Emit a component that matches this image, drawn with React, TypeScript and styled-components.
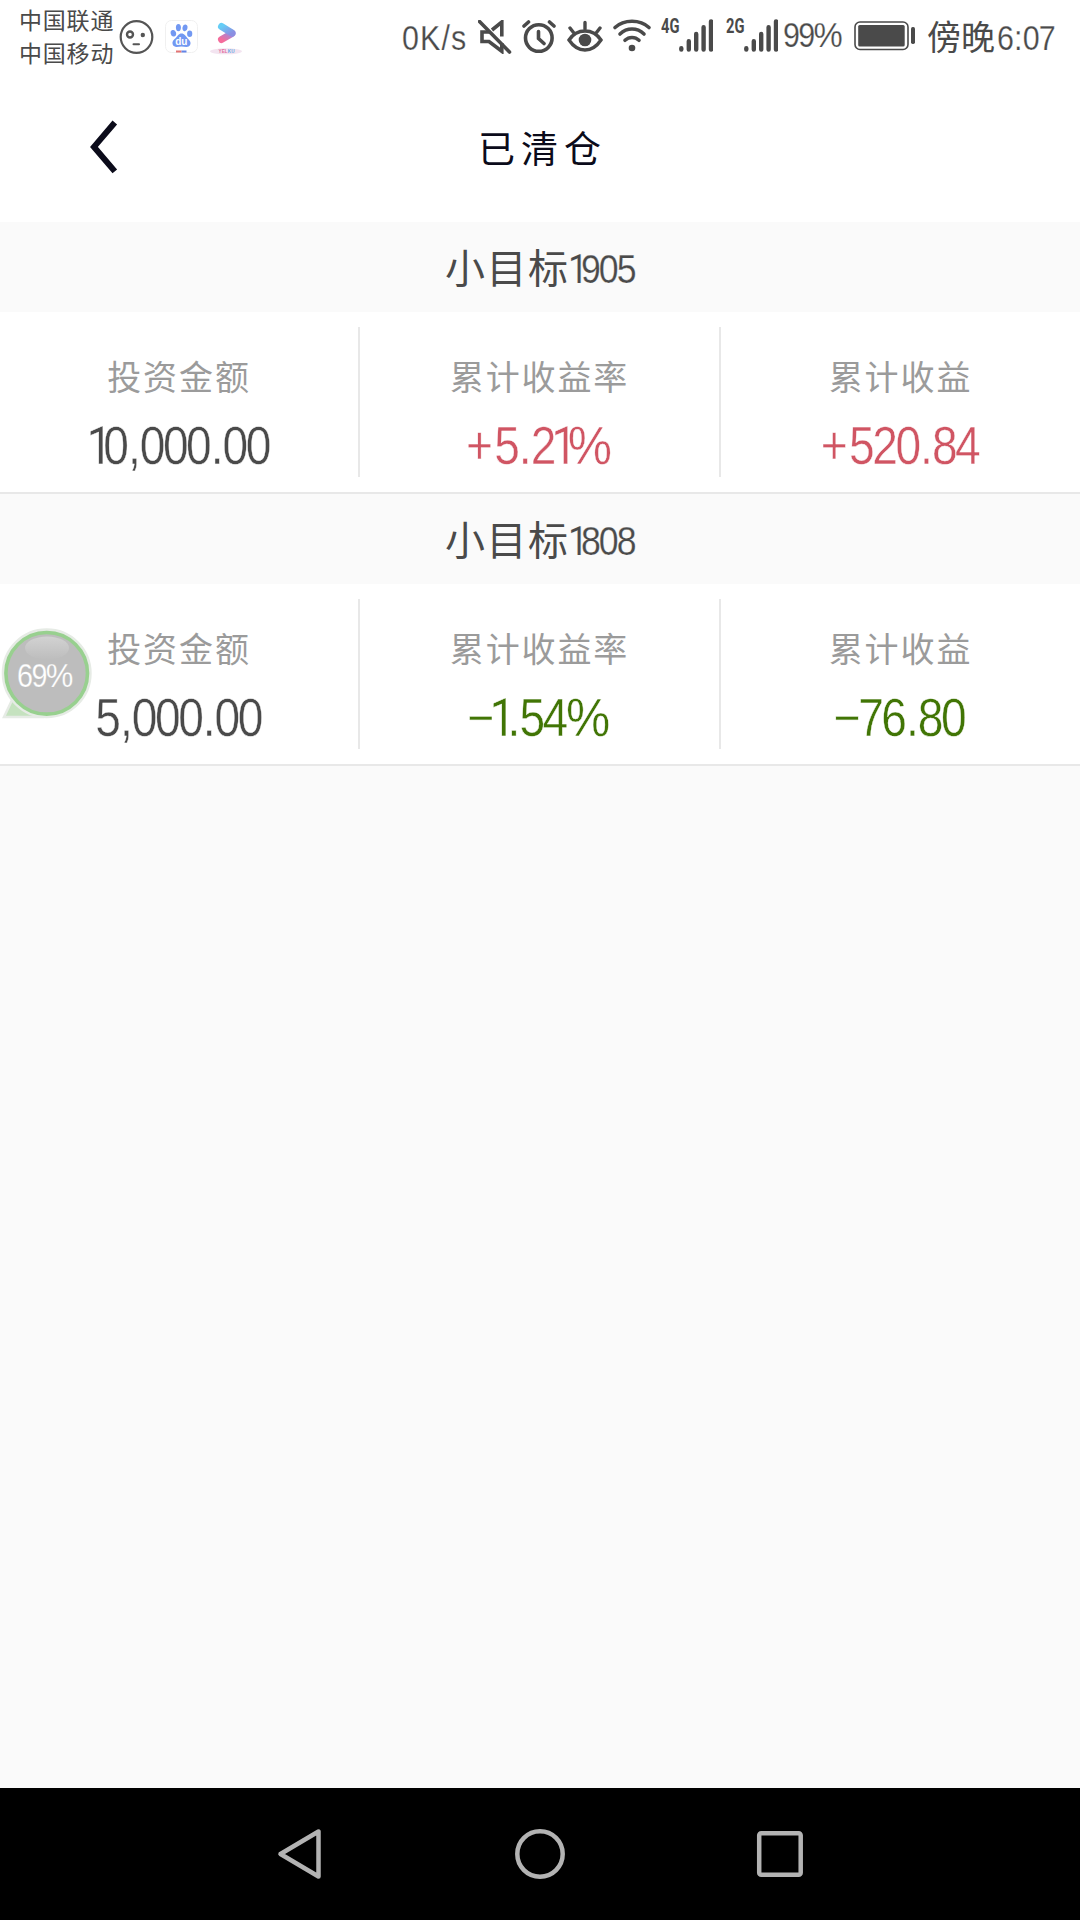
import React from "react";
import styled, { createGlobalStyle } from "styled-components";

const GlobalStyle = createGlobalStyle`
  * { box-sizing: border-box; }
  body { margin: 0; background: #fafafa; }
`;

const CJK = `"Noto Sans CJK SC", sans-serif`;
const LATIN = `"Liberation Sans", Arial, sans-serif`;

const Screen = styled.div`
  position: relative;
  display: flex;
  flex-direction: column;
  width: 1080px;
  height: 1920px;
  overflow: hidden;
  background: #fafafa;
  color: #4a4a4a;
  font-family: ${CJK};
`;

const StatusBar = styled.header`
  display: flex;
  align-items: flex-start;
  height: 74px;
  padding-left: 19px;
  background: #fff;
`;

const Carriers = styled.div`
  display: flex;
  flex-direction: column;
  width: 99px;
  padding-top: 3px;
  font-size: 23px;
  line-height: 33px;
  letter-spacing: 0.8px;
  white-space: nowrap;
`;

const Glyph = styled.svg<{ $gap?: number; $top?: number }>`
  display: block;
  flex: none;
  margin-left: ${(p) => p.$gap ?? 0}px;
  margin-top: ${(p) => p.$top ?? 0}px;
`;

const StatusText = styled.div<{ $width: number; $gap?: number; $top: number }>`
  display: flex;
  flex: none;
  width: ${(p) => p.$width}px;
  height: 40px;
  margin-left: ${(p) => p.$gap ?? 0}px;
  margin-top: ${(p) => p.$top}px;
  font-size: 34px;
  line-height: 40px;
  white-space: nowrap;
`;

const DigitRun = styled.span<{ $size: number; $track: number; $origin: string; $edge: string }>`
  display: block;
  font-family: ${LATIN};
  font-size: ${(p) => p.$size}px;
  letter-spacing: ${(p) => p.$track}em;
  transform: scaleX(0.87);
  transform-origin: ${(p) => p.$origin} center;
  white-space: nowrap;
  /* an edge in the background colour thins the strokes */
  -webkit-text-stroke: ${(p) => (p.$size > 50 ? 0.45 : 0.25)}px ${(p) => p.$edge};
`;

const NarrowOne = styled.span`
  letter-spacing: -0.2em;
  font-family: Roboto, sans-serif;
`;

const BeforeOne = styled.span`
  letter-spacing: -0.11em;
`;

const Mark = styled.span`
  margin: 0 0.032em;
`;

const Plus = styled.span`
  margin-right: 0.085em;
`;

const Percent = styled.span`
  display: inline-block;
  margin-right: 0.11em;
  transform: scaleX(1.08);
  transform-origin: left;
`;

const TitleBar = styled.div`
  display: grid;
  grid-template-columns: 200px 1fr 200px;
  height: 148px;
  background: #fff;
  color: #0b0b1a;
`;

const BackButton = styled.button`
  display: flex;
  width: 60px;
  height: 56px;
  margin: 46px 0 0 74px;
  padding: 0 0 0 14px;
  border: 0;
  background: none;
`;

const PageTitle = styled.h1`
  margin: 46px 0 0;
  padding-left: 5px;
  text-align: center;
  font-size: 37px;
  font-weight: 400;
  line-height: 54px;
  letter-spacing: 6px;
`;

const Holding = styled.section`
  background: #fff;
  border-bottom: 2px solid #e8e8e8;
`;

const HoldingName = styled.h2`
  display: flex;
  justify-content: center;
  height: 90px;
  margin: 0;
  background: #fafafa;
  font-size: 40px;
  font-weight: 400;
  line-height: 88px;
  letter-spacing: 1.500px;
`;

const Code = styled.div`
  width: 67px;
  margin-left: -1.500px;
  padding-top: 3px;
`;

const Metrics = styled.div`
  display: grid;
  grid-template-columns: 360px 361px 359px;
  height: 180px;
  padding: 15px 0;
`;

const Metric = styled.div`
  display: flex;
  flex-direction: column;
  align-items: center;
  padding-top: 23px;
  border-right: 2px solid #e8e8e8;
  &:last-child {
    border-right: 0;
  }
`;

const Label = styled.div`
  height: 50px;
  font-size: 34px;
  line-height: 51px;
  letter-spacing: 1.900px;
  color: #9b9b9b;
`;

const Value = styled.div<{ $tone: string }>`
  display: flex;
  height: 60px;
  margin-top: 15px;
  padding-right: 2.500px;
  line-height: 61px;
  color: ${(p) => p.$tone};
`;

const Bubble = styled.div`
  position: absolute;
  left: 0;
  top: 626px;
  width: 94px;
  height: 96px;
`;

const BubbleText = styled.div`
  position: absolute;
  left: 17px;
  top: 30px;
  line-height: 40px;
  color: #fff;
`;

const NavBar = styled.nav`
  display: flex;
  justify-content: center;
  align-items: center;
  gap: 190px;
  height: 132px;
  margin-top: auto;
  background: #000;
`;

const Network = styled.div<{ $gap: number }>`
  flex: none;
  width: 18px;
  margin-left: ${(p) => p.$gap}px;
  margin-top: 16px;
  font: 700 21px/21px Roboto, sans-serif;
  span {
    display: inline-block;
    transform: scaleX(0.7);
    transform-origin: left;
  }
`;

const pickGlyph = (c: string, i: number, all: string[]) => {
  if (c === "1") return <NarrowOne key={i}>{c}</NarrowOne>;
  if (c === "." || c === "," || c === ":") return <Mark key={i}>{c}</Mark>;
  if (c === "+") return <Plus key={i}>{c}</Plus>;
  if (c === "%") return <Percent key={i}>{c}</Percent>;
  if (all[i + 1] === "1") return <BeforeOne key={i}>{c}</BeforeOne>;
  return c;
};

type DigitsProps = {
  text: string;
  size: number;
  track?: number;
  origin?: string;
  edge?: string;
};

const Digits = ({ text, size, track = -0.054, origin = "left", edge = "#fff" }: DigitsProps) => (
  <DigitRun $size={size} $track={track} $origin={origin} $edge={edge}>
    {text.split("").map(pickGlyph)}
  </DigitRun>
);

const Signal = () => (
  <Glyph width="34" height="34" viewBox="0 0 34 34" $top={19} stroke="#4a4a4a" strokeWidth="4.400" strokeLinecap="round">
    <path d="M2.300 29.200v1.300M9.800 22.200v8.300M17.200 15v15.500M24.600 8.200v22.300M32 2.400v28.100" />
  </Glyph>
);

const RED = "#d05563";
const GREEN = "#417505";
const DARK = "#4a4a4a";

const holdings = [
  {
    code: "1905",
    metrics: [
      { label: "投资金额", value: "10,000.00", tone: DARK },
      { label: "累计收益率", value: "+5.21%", tone: RED },
      { label: "累计收益", value: "+520.84", tone: RED },
    ],
  },
  {
    code: "1808",
    metrics: [
      { label: "投资金额", value: "5,000.00", tone: DARK },
      { label: "累计收益率", value: "−1.54%", tone: GREEN },
      { label: "累计收益", value: "−76.80", tone: GREEN },
    ],
  },
];

export default function App() {
  return (
    <>
      <GlobalStyle />
      <Screen>
        <StatusBar>
          <Carriers>
            <span>中国联通</span>
            <span>中国移动</span>
          </Carriers>
          <Glyph width="36" height="36" viewBox="0 0 36 36" $top={19} fill="none" stroke="#555">
            <circle cx="18.500" cy="18" r="15.800" strokeWidth="2.200" />
            <circle cx="12" cy="15.500" r="3" strokeWidth="2.400" />
            <circle cx="24.800" cy="16" r="2.200" fill="#555" stroke="none" />
            <path d="M15.500 25.300h5.500" strokeWidth="2" strokeLinecap="round" />
          </Glyph>
          <Glyph width="33" height="34" viewBox="0 0 33 34" $gap={11} $top={20}>
            <rect x="0.500" y="0.500" width="32" height="32" rx="6" fill="#fff" stroke="#f0f0f0" />
            <g fill="#7298f2">
              <ellipse cx="8.400" cy="13.200" rx="2.700" ry="3.300" transform="rotate(-15 8.400 13.200)" />
              <ellipse cx="13.400" cy="7.600" rx="2.500" ry="3.600" />
              <ellipse cx="20" cy="7.800" rx="2.500" ry="3.400" transform="rotate(10 20 7.800)" />
              <ellipse cx="24.700" cy="13.700" rx="2.600" ry="3.300" />
              <path d="M16.500 13.600c3 0 4 2.500 6 4.600 2.500 2.400 3.700 4 2.800 6.300-1.700 4-5.800 1.900-8.800 1.900s-7.200 2-8.800-1.800c-1-2.500.6-4.500 3-6.500 2-1.800 2.800-4.500 5.800-4.500z" />
            </g>
            <text x="10.200" y="24.500" fontFamily="Liberation Sans, sans-serif" fontWeight="700" fontSize="10" fill="#fff">du</text>
            <path d="M11 31.500h5.500" stroke="#e37474" strokeWidth="2" />
            <path d="M16.500 31.500h5" stroke="#6284e8" strokeWidth="2" />
          </Glyph>
          <Glyph width="34" height="34" viewBox="0 0 34 34" $gap={11} $top={21}>
            <defs>
              <linearGradient id="top" x1="0" y1="0" x2="1" y2="1">
                <stop offset="0" stopColor="#65cdf6" />
                <stop offset="1" stopColor="#8b8fe2" />
              </linearGradient>
              <linearGradient id="low" x1="0" y1="1" x2="1" y2="0">
                <stop offset="0" stopColor="#f56c9b" />
                <stop offset="1" stopColor="#9a8bdf" />
              </linearGradient>
            </defs>
            <ellipse cx="17" cy="30.300" rx="16" ry="3" fill="#f3e4f0" />
            <path d="M12.500 18.500L23 12.500" stroke="url(#low)" strokeWidth="7" strokeLinecap="round" />
            <path d="M12.500 5.500L23 12" stroke="url(#top)" strokeWidth="7" strokeLinecap="round" />
            <text x="9.500" y="32" fontFamily="Liberation Sans, sans-serif" fontWeight="700" fontSize="4.600" textLength="16">
              <tspan fill="#e36d9d">YEL</tspan>
              <tspan fill="#69a9e5">KU</tspan>
            </text>
          </Glyph>
          <StatusText $width={76} $gap={159} $top={18}>
            <Digits text="0K/s" size={35} track={0.035} />
          </StatusText>
          <Glyph width="34" height="34" viewBox="0 0 34 34" $top={20} fill="none" stroke="#4a4a4a" strokeWidth="3.600">
            <path d="M14 10l9.800-8v14.500M12 12H4v9.500h7l12.800 9.800V23" />
            <path d="M1.500 1.500l30 30.500" strokeLinecap="round" />
          </Glyph>
          <Glyph width="34" height="34" viewBox="0 0 34 34" $gap={10} $top={20} fill="none" stroke="#4a4a4a" strokeWidth="3.600" strokeLinecap="round">
            <circle cx="16.800" cy="18" r="13.300" />
            <path d="M16.500 11.500v7l5.500 5M2 6l4.500-4M27.500 2L32 6" />
          </Glyph>
          <Glyph width="36" height="34" viewBox="0 0 36 34" $gap={11} $top={20} fill="none" stroke="#4a4a4a" strokeWidth="3.400" strokeLinecap="round">
            <path d="M2 20c4-6 9.500-9 16-9s12 3 16 9c-4 6-9.500 10-16 10S6 26 2 20zM18 9V2.500M6.500 12.500L3 8M29.500 12.500L33 8" />
            <circle cx="18" cy="20" r="6.300" fill="#4a4a4a" stroke="none" />
          </Glyph>
          <Glyph width="40" height="34" viewBox="0 0 40 34" $gap={9} $top={19} fill="none" stroke="#4a4a4a" strokeWidth="3.600" strokeLinecap="round">
            <path d="M3 8.500c9-8.300 25-8.300 34 0M8 15c7-6.600 17-6.600 24 0M13 21.300c4-3.800 10-3.800 14 0" />
            <circle cx="20" cy="29" r="3.300" fill="#4a4a4a" stroke="none" />
          </Glyph>
          <Network $gap={9}><span>4G</span></Network>
          <Signal />
          <Network $gap={13}><span>2G</span></Network>
          <Signal />
          <StatusText $width={68} $gap={5} $top={15}>
            <Digits text="99%" size={35} />
          </StatusText>
          <Glyph width="62" height="30" viewBox="0 0 62 30" $gap={3} $top={21}>
            <rect x="1" y="1" width="53" height="27.500" rx="5" fill="none" stroke="#4a4a4a" strokeWidth="1.600" />
            <rect x="4.200" y="4" width="46.500" height="21.500" rx="1.500" fill="#4a4a4a" />
            <rect x="57" y="6" width="4" height="17" rx="1.700" fill="#4a4a4a" />
          </Glyph>
          <StatusText $width={70} $gap={11} $top={16}>傍晚</StatusText>
          <StatusText $width={62} $top={18}>
            <Digits text="6:07" size={35} track={-0.028} />
          </StatusText>
        </StatusBar>
        <TitleBar>
          <BackButton aria-label="返回">
            <svg width="32" height="56" viewBox="0 0 32 56">
              <path d="M26.800 2.500L6 26.900l20.800 24.500" fill="none" stroke="#0b0b1a" strokeWidth="6" />
            </svg>
          </BackButton>
          <PageTitle>已清仓</PageTitle>
        </TitleBar>
        {holdings.map((h) => (
          <Holding key={h.code}>
            <HoldingName>
              小目标
              <Code>
                <Digits text={h.code} size={41} edge="#fafafa" />
              </Code>
            </HoldingName>
            <Metrics>
              {h.metrics.map((m) => (
                <Metric key={m.label}>
                  <Label>{m.label}</Label>
                  <Value $tone={m.tone}>
                    <Digits text={m.value} size={53} origin="center" />
                  </Value>
                </Metric>
              ))}
            </Metrics>
          </Holding>
        ))}
        <Bubble>
          <svg width="94" height="96" viewBox="0 0 94 96">
            <defs>
              <linearGradient id="gloss" x1="0" y1="0" x2="0" y2="1">
                <stop offset="0" stopColor="#d2d2d2" />
                <stop offset="1" stopColor="#bdbdbd" />
              </linearGradient>
            </defs>
            <path d="M13 72L4 91h36z" fill="#c5e2bf" stroke="#e6ebe5" strokeWidth="2.500" />
            <circle cx="46.700" cy="47.300" r="42" fill="#bdbdbd" stroke="#e6ebe5" strokeWidth="6" />
            <circle cx="46.700" cy="47.300" r="40.800" fill="#bdbdbd" stroke="#98d08f" strokeWidth="3.600" />
            <ellipse cx="47" cy="22" rx="22" ry="11.500" fill="url(#gloss)" />
          </svg>
          <BubbleText>
            <Digits text="69%" size={33} edge="#bdbdbd" />
          </BubbleText>
        </Bubble>
        <NavBar>
          <svg width="50" height="54" viewBox="0 0 50 54" fill="none" stroke="#b3b3b3" strokeWidth="4.500" strokeLinejoin="round">
            <path d="M43.500 4.500v45L5.500 27z" />
          </svg>
          <svg width="50" height="54" viewBox="0 0 50 54" fill="none" stroke="#b3b3b3" strokeWidth="4.500">
            <circle cx="25" cy="27" r="22.700" />
          </svg>
          <svg width="50" height="54" viewBox="0 0 50 54" fill="none" stroke="#b3b3b3" strokeWidth="4.500">
            <rect x="4.200" y="6.200" width="41.500" height="41.500" rx="2" />
          </svg>
        </NavBar>
      </Screen>
    </>
  );
}
